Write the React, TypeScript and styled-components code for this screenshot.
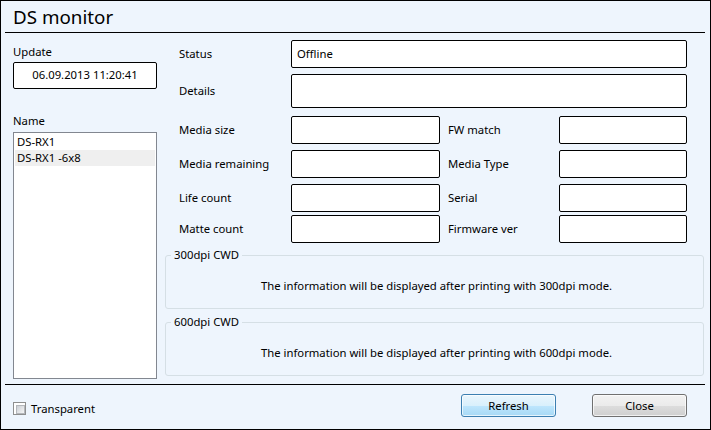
import React from 'react';
import styled, { createGlobalStyle } from 'styled-components';

const GlobalStyle = createGlobalStyle`
  html, body {
    margin: 0;
    padding: 0;
    background: #ffffff;
  }
  * {
    box-sizing: border-box;
  }
`;

const BG = '#eef5fd';

const Window = styled.div`
  width: 711px;
  height: 430px;
  border: 1px solid #000;
  background: ${BG};
  display: flex;
  flex-direction: column;
  font-family: 'Noto Sans', 'Open Sans', sans-serif;
  font-size: 11.3px;
  color: #000;
`;

const TitleBar = styled.div`
  height: 31px;
  padding: 3px 0 0 12px;
  font-size: 18.8px;
  line-height: 26px;
  color: #000;
`;

const Rule = styled.div`
  height: 1px;
  margin: 0 5px 0 4px;
  background: #000;
`;

const Body = styled.div`
  height: 351px;
  display: grid;
  grid-template-columns: 144px 539px;
  column-gap: 8px;
  padding-left: 12px;
`;

const LeftCol = styled.div`
  display: flex;
  flex-direction: column;
  padding-top: 11px;
`;

const SmallLabel = styled.div<{ $gap?: number }>`
  height: 16px;
  line-height: 16px;
  margin-top: ${(p) => p.$gap ?? 0}px;
`;

const UpdateBox = styled.div`
  margin-top: 2px;
  height: 27px;
  border: 1px solid #000;
  border-radius: 2px;
  background: #fff;
  display: flex;
  align-items: center;
  justify-content: center;
  padding-bottom: 2px;
`;

const NameList = styled.ul`
  margin: 3px 0 0 0;
  height: 247px;
  list-style: none;
  padding: 1px;
  border: 1px solid #828790;
  background: #fff;
`;

const NameItem = styled.li<{ $selected?: boolean }>`
  height: 16px;
  line-height: 15px;
  padding-left: 2px;
  background: ${(p) => (p.$selected ? '#efefef' : 'transparent')};
`;

const RightCol = styled.div`
  display: flex;
  flex-direction: column;
  padding-top: 7px;
`;

const FormRow = styled.div<{ $gap?: number; $h?: number }>`
  display: flex;
  align-items: center;
  margin-top: ${(p) => p.$gap ?? 0}px;
  height: ${(p) => p.$h ?? 28}px;
  padding-left: 14px;
`;

const FieldLabel = styled.div<{ $w: number; $indent?: number }>`
  width: ${(p) => p.$w}px;
  flex: none;
  padding-left: ${(p) => p.$indent ?? 0}px;
  padding-bottom: 1px;
`;

const Field = styled.div<{ $w: number }>`
  width: ${(p) => p.$w}px;
  height: 100%;
  flex: none;
  border: 1px solid #000;
  border-radius: 2px;
  background: #fff;
  padding: 0 0 1px 5px;
  display: flex;
  align-items: center;
`;

const Group = styled.fieldset<{ $gap: number }>`
  margin: ${(p) => p.$gap}px 0 0 0;
  padding: 0;
  min-width: 0;
  border: 1px solid #d5dfe5;
  border-radius: 3px;
`;

const GroupLegend = styled.legend`
  margin-left: 5px;
  padding: 0 3px;
  line-height: 16px;
`;

const GroupBody = styled.div`
  height: 45px;
  display: flex;
  align-items: center;
  justify-content: center;
  padding: 0 0 1px 4px;
`;

const Footer = styled.div`
  flex: 1;
  display: flex;
  align-items: center;
  padding: 0 23px 3px 12px;
`;

const CheckRow = styled.label`
  display: flex;
  align-items: center;
  gap: 5px;
  margin-top: 5px;
`;

const CheckBox = styled.span`
  width: 13px;
  height: 13px;
  border: 1px solid #8e8f8f;
  background: #fff;
  padding: 2px;
  display: inline-block;

  &::after {
    content: '';
    display: block;
    width: 100%;
    height: 100%;
    background: linear-gradient(135deg, #cbcfd5 0%, #f6f6f6 100%);
    border: 1px solid #b4b7bb;
  }
`;

const Spacer = styled.div`
  flex: 1;
`;

const Button = styled.button<{ $primary?: boolean }>`
  width: 95px;
  height: 23px;
  margin-left: ${(p) => (p.$primary ? 0 : 36)}px;
  font-family: inherit;
  font-size: 11.3px;
  color: #000;
  border-radius: 3px;
  border: 1px solid ${(p) => (p.$primary ? '#3c7fb1' : '#707070')};
  background: ${(p) =>
    p.$primary
      ? 'linear-gradient(#eaf6fd 0%, #d9f0fc 50%, #bee6fd 51%, #a7d9f5 100%)'
      : 'linear-gradient(#f2f2f2 0%, #ebebeb 50%, #dddddd 51%, #cfcfcf 100%)'};
  box-shadow: inset 0 0 0 1px rgba(255, 255, 255, 0.7);
  padding: 0 0 1px 0;
`;

const rows = [
  { a: 'Media size', b: 'FW match', gap: 8 },
  { a: 'Media remaining', b: 'Media Type', gap: 6 },
  { a: 'Life count', b: 'Serial', gap: 6 },
  { a: 'Matte count', b: 'Firmware ver', gap: 3 },
];

export default function App() {
  return (
    <>
      <GlobalStyle />
      <Window>
        <TitleBar>DS monitor</TitleBar>
        <Rule />
        <Body>
          <LeftCol>
            <SmallLabel>Update</SmallLabel>
            <UpdateBox>06.09.2013 11:20:41</UpdateBox>
            <SmallLabel $gap={24}>Name</SmallLabel>
            <NameList>
              <NameItem>DS-RX1</NameItem>
              <NameItem $selected>DS-RX1 -6x8</NameItem>
            </NameList>
          </LeftCol>
          <RightCol>
            <FormRow>
              <FieldLabel $w={112}>Status</FieldLabel>
              <Field $w={396}>Offline</Field>
            </FormRow>
            <FormRow $gap={6} $h={34}>
              <FieldLabel $w={112}>Details</FieldLabel>
              <Field $w={396} />
            </FormRow>
            {rows.map((r) => (
              <FormRow key={r.a} $gap={r.gap}>
                <FieldLabel $w={112}>{r.a}</FieldLabel>
                <Field $w={149} />
                <FieldLabel $w={119} $indent={8}>
                  {r.b}
                </FieldLabel>
                <Field $w={128} />
              </FormRow>
            ))}
            <Group $gap={4}>
              <GroupLegend>300dpi CWD</GroupLegend>
              <GroupBody>
                The information will be displayed after printing with 300dpi mode.
              </GroupBody>
            </Group>
            <Group $gap={5}>
              <GroupLegend>600dpi CWD</GroupLegend>
              <GroupBody>
                The information will be displayed after printing with 600dpi mode.
              </GroupBody>
            </Group>
          </RightCol>
        </Body>
        <Rule />
        <Footer>
          <CheckRow>
            <CheckBox />
            Transparent
          </CheckRow>
          <Spacer />
          <Button $primary>Refresh</Button>
          <Button>Close</Button>
        </Footer>
      </Window>
    </>
  );
}
